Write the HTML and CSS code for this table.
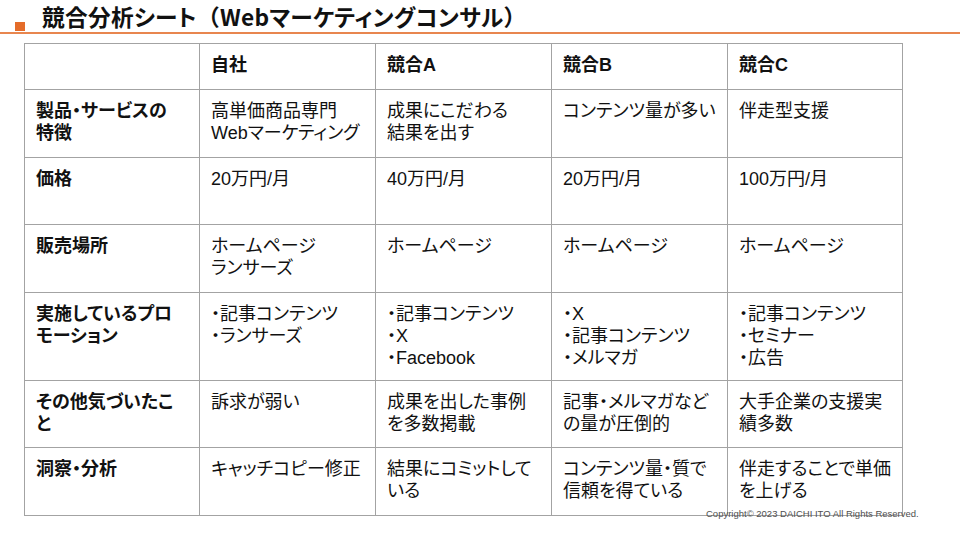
FILE: index.html
```html
<!DOCTYPE html>
<html lang="ja">
<head>
<meta charset="utf-8">
<link rel="stylesheet" href="styles.css">
</head>
<body>
<div class="slide">
  <header class="head">
    <span class="mark"></span>
    <h1 class="title">競合分析シート<span class="br">（</span>Webマーケティングコンサル<span class="br">）</span></h1>
  </header>
  <div class="body">
    <table class="grid">
      <colgroup>
        <col class="c0"><col class="c1"><col class="c2"><col class="c3"><col class="c4">
      </colgroup>
      <tr class="r-head">
        <th></th><th>自社</th><th>競合A</th><th>競合B</th><th>競合C</th>
      </tr>
      <tr class="r-a">
        <th>製品・サービスの<br>特徴</th>
        <td>高単価商品専門<br>Webマーケティング</td>
        <td>成果にこだわる<br>結果を出す</td>
        <td>コンテンツ量が多い</td>
        <td>伴走型支援</td>
      </tr>
      <tr class="r-b">
        <th>価格</th>
        <td>20万円/月</td>
        <td>40万円/月</td>
        <td>20万円/月</td>
        <td>100万円/月</td>
      </tr>
      <tr class="r-c">
        <th>販売場所</th>
        <td>ホームページ<br>ランサーズ</td>
        <td>ホームページ</td>
        <td>ホームページ</td>
        <td>ホームページ</td>
      </tr>
      <tr class="r-d">
        <th>実施しているプロ<br>モーション</th>
        <td>・記事コンテンツ<br>・ランサーズ</td>
        <td>・記事コンテンツ<br>・X<br>・Facebook</td>
        <td>・X<br>・記事コンテンツ<br>・メルマガ</td>
        <td>・記事コンテンツ<br>・セミナー<br>・広告</td>
      </tr>
      <tr class="r-e">
        <th>その他気づいたこ<br>と</th>
        <td>訴求が弱い</td>
        <td>成果を出した事例<br>を多数掲載</td>
        <td>記事・メルマガなど<br>の量が圧倒的</td>
        <td>大手企業の支援実<br>績多数</td>
      </tr>
      <tr class="r-f">
        <th>洞察・分析</th>
        <td>キャッチコピー修正</td>
        <td>結果にコミットして<br>いる</td>
        <td>コンテンツ量・質で<br>信頼を得ている</td>
        <td>伴走することで単価<br>を上げる</td>
      </tr>
    </table>
    <p class="copy">Copyright© 2023 DAICHI ITO All Rights Reserved.</p>
  </div>
</div>
</body>
</html>
```

FILE: styles.css
```css
html, body {
  margin: 0;
  padding: 0;
  background: #ffffff;
}

.slide {
  width: 960px;
  height: 540px;
  position: relative;
  overflow: hidden;
  background: #ffffff;
}

.head {
  display: flex;
  align-items: flex-end;
  height: 32px;
  border-bottom: 2px solid #e8864f;
}

.mark {
  width: 10px;
  height: 9px;
  background: #e46c2a;
  margin-left: 15px;
  margin-bottom: 1px;
}

.title {
  margin: 0 0 0 17px;
  font-family: "Noto Sans CJK JP", "Liberation Sans", sans-serif;
  font-weight: 700;
  font-size: 22.7px;
  line-height: 30px;
  height: 30px;
  color: #111111;
  font-feature-settings: "palt";
  letter-spacing: 0.3px;
  white-space: nowrap;
}

.title .br {
  font-feature-settings: normal;
}

.body {
  position: relative;
  padding: 9px 0 0 24px;
}

.grid {
  border-collapse: collapse;
  table-layout: fixed;
  width: 878px;
  font-family: "Liberation Sans", "Noto Sans CJK JP", sans-serif;
  font-size: 18px;
  line-height: 22px;
  color: #111111;
  font-feature-settings: "palt";
}

.c0 { width: 175px; }
.c1 { width: 176px; }
.c2 { width: 176px; }
.c3 { width: 176px; }
.c4 { width: 175px; }

.grid th,
.grid td {
  border: 1px solid #a3a3a3;
  vertical-align: top;
  text-align: left;
  padding: 10px 4px 0 11px;
  white-space: nowrap;
  overflow: hidden;
}

.grid th {
  font-weight: 700;
}

.grid td {
  font-weight: 400;
}

.r-head th { height: 35px; }
.r-a > * { height: 57px; }
.r-b > * { height: 56px; }
.r-c > * { height: 57px; }
.r-d > * { height: 77px; }
.r-e > * { height: 56px; }
.r-f > * { height: 57px; }

.copy {
  position: absolute;
  left: 706px;
  top: 474px;
  margin: 0;
  font-family: "Liberation Sans", sans-serif;
  font-size: 9.5px;
  line-height: 12px;
  color: #505050;
  white-space: nowrap;
}
```
